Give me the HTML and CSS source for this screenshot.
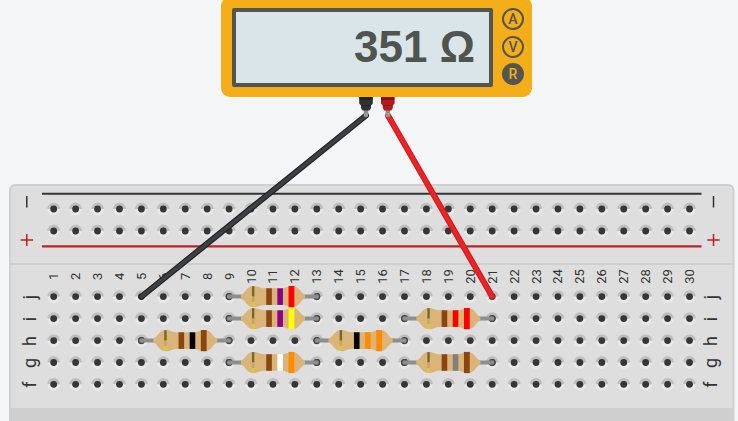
FILE: index.html
```html
<!DOCTYPE html>
<html lang="en">
<head>
<meta charset="utf-8">
<meta name="viewport" content="width=device-width, initial-scale=1">
<title>Resistance measurement</title>
<link rel="stylesheet" href="styles.css">
</head>
<body>
<main class="workspace">
  <section class="meter" aria-label="Multimeter">
    <output class="meter-display">351 Ω</output>
    <div class="meter-modes">
      <button type="button" class="mode">A</button>
      <button type="button" class="mode">V</button>
      <button type="button" class="mode mode-active" aria-pressed="true">R</button>
    </div>
  </section>
  <svg class="circuit" viewBox="0 97 738 324" role="img" aria-label="Breadboard with resistors">
    <defs>
      <g id="hole">
        <circle r="6.4" fill="#e8e8e8"/>
        <path d="M-6.4 0a6.4 6.4 0 0 1 12.8 0z" fill="#bfbfbf"/>
        <circle r="3.4" fill="#363636"/>
      </g>
      <g id="resistor-body">
        <circle cx="-43.8" r="2.9" fill="#8e8e8e" stroke="#454545" stroke-width="1.3"/>
        <circle cx="43.8" r="2.9" fill="#8e8e8e" stroke="#454545" stroke-width="1.3"/>
        <path d="M-43 0H43" stroke="#8e8e8e" stroke-width="4"/>
        <path d="M-32-2C-28-3-26-10.6-20-10.6C-14-10.6-14-8.3-8-8.3H8C14-8.3 14-10.6 20-10.6C26-10.6 28-3 32-2V2C28 3 26 10.6 20 10.6C14 10.6 14 8.3 8 8.3H-8C-14 8.3-14 10.6-20 10.6C-26 10.6-28 3-32 2Z" fill="#dab577"/>
        <path d="M-21-10.4h2.4V0H-21z" fill="#75672f"/>
        <path d="M-21 0h2.4v5.5H-21z" fill="#c9a55c"/>
        <path d="M-21 5.5h2.4v4.9H-21z" fill="#d7cb35"/>
      </g>
      <g id="plug">
        <path d="M-2.2 12H2.2V18H-2.2z" fill="#8b8b8b"/>
        <path d="M-6.8 0H6.8V6.5L5 8.5V11L3.5 13.5H-3.5L-5 11V8.5L-6.8 6.5z" fill="currentColor"/>
        <path d="M-6.8 0H6.8V3H-6.8zM-5 8H5V9H-5z" fill="#000" opacity=".28"/>
      </g>
    </defs>

    <path d="M9 421V190a6 6 0 0 1 6-6H728.500a6 6 0 0 1 6 6V421z" fill="#cfcfcf"/>
    <path d="M11 408V190a4 4 0 0 1 4-4H728.500a4 4 0 0 1 4 4V408z" fill="#dedede"/>
    <path d="M11 264H733" stroke="#cfcfcf" stroke-width="2"/>
    <path d="M42 193.700H701.500" stroke="#333436" stroke-width="2"/>
    <path d="M42 246.300H701.500" stroke="#b92424" stroke-width="2.200"/>
    <path d="M26.800 196V207.500M713.500 196V207.500" stroke="#333" stroke-width="1.500"/>
    <path d="M20.700 240H33M26.800 234V246M707.300 240H719.700M713.500 234V246" stroke="#bd2020" stroke-width="1.500"/>
    <g id="holes"></g>
    <g id="labels"></g>
    <g id="resistors"></g>

    <g stroke-linecap="round">
      <path d="M366 115.500L141.600 296.500" stroke="#1f2224" stroke-width="6"/>
      <path d="M366 115.500L141.600 296.500" stroke="#3c3f43" stroke-width="3.800"/>
      <path d="M388 115.500L492.200 296.500" stroke="#c41a1c" stroke-width="6"/>
      <path d="M388 115.500L492.200 296.500" stroke="#ec2226" stroke-width="4.200"/>
    </g>
    <use href="#plug" class="plug-black" x="366" y="97"/>
    <use href="#plug" class="plug-red" x="387.800" y="97"/>
    <circle cx="366" cy="115" r="2.300" fill="#999"/>
    <circle cx="387.800" cy="115" r="2.300" fill="#999"/>
  </svg>
</main>
<script src="board.js"></script>
</body>
</html>
```
FILE: styles.css
```css
* {
  box-sizing: border-box;
}

body {
  margin: 0;
  background: #f4f5f7;
  font-family: Roboto, "Liberation Sans", sans-serif;
}

.workspace {
  display: grid;
  grid-template-columns: 221fr 311fr 206fr;
}

.meter {
  grid-column: 2;
  display: flex;
  gap: 9px;
  margin-top: -3px;
  padding: 11px 8px 10px 11px;
  border-radius: 9px;
  background: #f3ae19;
}

.meter-display {
  flex: 1;
  padding: 0 14px 2px;
  border: 4px solid #515651;
  border-radius: 2px;
  background: #dae5ea;
  color: #4f544f;
  font: bold 44px/69px "Liberation Sans", Arial, sans-serif;
  text-align: right;
  white-space: nowrap;
}

.meter-modes {
  display: flex;
  flex-direction: column;
  justify-content: space-between;
  padding-bottom: 2px;
}

.mode {
  width: 22px;
  height: 22px;
  padding: 0;
  border: 2px solid #515651;
  border-radius: 50%;
  background: transparent;
  color: #515651;
  font: 500 14px/18px Roboto, sans-serif;
  text-align: center;
}

.mode-active {
  background: #515651;
  color: #f3ae19;
}

.circuit {
  grid-column: 1 / -1;
  display: block;
  width: 100%;
}

.column-label,
.row-label {
  fill: #333;
  text-anchor: middle;
}

.column-label {
  font-size: 13px;
}

.row-label {
  font-size: 18px;
}

.plug-black {
  color: #303132;
}

.plug-red {
  color: #b51a1d;
}
```
FILE: board.js
```js
const SVG = "http://www.w3.org/2000/svg";
const columnX = (n) => 53.7 + (n - 1) * 21.925;
const rowY = { j: 296.6, i: 318.6, h: 340.6, g: 362.5, f: 384.3 };

function add(parent, tag, attrs, text) {
  const el = document.createElementNS(SVG, tag);
  for (const [key, value] of Object.entries(attrs)) el.setAttribute(key, value);
  if (text) el.textContent = text;
  parent.appendChild(el);
  return el;
}

const holes = document.getElementById("holes");
const labels = document.getElementById("labels");
const resistors = document.getElementById("resistors");

for (let n = 1; n <= 30; n++) {
  const x = columnX(n);
  for (const y of [209, 231, ...Object.values(rowY)]) {
    add(holes, "use", { href: "#hole", x, y });
  }
  add(labels, "text", {
    class: "column-label",
    transform: `translate(${x + 4.5} 276.4) rotate(-90)`
  }, String(n));
}

for (const [name, y] of Object.entries(rowY)) {
  for (const x of [35.7, 717.4]) {
    add(labels, "text", {
      class: "row-label",
      transform: `translate(${x} ${y + 0.4}) rotate(-90)`
    }, name);
  }
}

const brown = "#8b4513";
const orange = "#ff8c00";
const parts = [
  { row: "j", column: 11, bands: [brown, "#8b008b", "#ff0000"] },
  { row: "i", column: 11, bands: [brown, "#8b008b", "#ffff00"] },
  { row: "h", column: 7, bands: [brown, "#000000", brown] },
  { row: "g", column: 11, bands: [brown, "#ffffff", orange] },
  { row: "h", column: 15, bands: ["#000000", orange, orange] },
  { row: "i", column: 19, bands: [brown, "#ff0000", "#ff0000"] },
  { row: "g", column: 19, bands: [brown, "#808080", brown] }
];

for (const part of parts) {
  const g = add(resistors, "g", {
    transform: `translate(${columnX(part.column)} ${rowY[part.row]})`
  });
  add(g, "use", { href: "#resistor-body" });
  const [first, second, third] = part.bands;
  add(g, "rect", { x: -6.7, y: -8.3, width: 5.6, height: 16.6, fill: first });
  add(g, "rect", { x: 4.4, y: -8.3, width: 5.6, height: 16.6, fill: second });
  add(g, "rect", { x: 15.6, y: -10.6, width: 5.8, height: 21.2, fill: third });
}
```
